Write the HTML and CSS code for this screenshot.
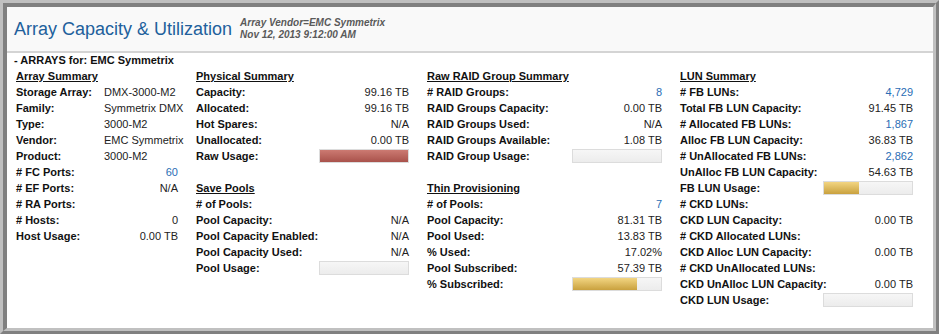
FILE: index.html
```html
<!DOCTYPE html>
<html lang="en">
<head>
  <meta charset="UTF-8" />
  <title>Array Capacity &amp; Utilization</title>
  <link rel="stylesheet" href="styles.css">
</head>
<body>
  <div class="frame">
    <div class="panel">
      <!-- Заголовок -->
      <div class="header">
        <h1 class="title">Array Capacity &amp; Utilization</h1>
        <div class="subtitle">
          <div>Array Vendor=EMC Symmetrix</div>
          <div>Nov 12, 2013 9:12:00 AM</div>
        </div>
      </div>

      <div class="content">
        <div class="group-title">- ARRAYS for: EMC Symmetrix</div>

        <div class="columns">
          <!-- Array Summary -->
          <div class="col col-1">
            <div class="heading">Array Summary</div>
            <div class="row"><span class="label">Storage Array:</span><span class="value text">DMX-3000-M2</span></div>
            <div class="row"><span class="label">Family:</span><span class="value text">Symmetrix DMX</span></div>
            <div class="row"><span class="label">Type:</span><span class="value text">3000-M2</span></div>
            <div class="row"><span class="label">Vendor:</span><span class="value text">EMC Symmetrix</span></div>
            <div class="row"><span class="label">Product:</span><span class="value text">3000-M2</span></div>
            <div class="row"><span class="label"># FC Ports:</span><span class="value link">60</span></div>
            <div class="row"><span class="label"># EF Ports:</span><span class="value">N/A</span></div>
            <div class="row"><span class="label"># RA Ports:</span><span class="value"></span></div>
            <div class="row"><span class="label"># Hosts:</span><span class="value">0</span></div>
            <div class="row"><span class="label">Host Usage:</span><span class="value">0.00 TB</span></div>
          </div>

          <!-- Physical Summary / Save Pools -->
          <div class="col col-2">
            <div class="heading">Physical Summary</div>
            <div class="row"><span class="label">Capacity:</span><span class="value">99.16 TB</span></div>
            <div class="row"><span class="label">Allocated:</span><span class="value">99.16 TB</span></div>
            <div class="row"><span class="label">Hot Spares:</span><span class="value">N/A</span></div>
            <div class="row"><span class="label">Unallocated:</span><span class="value">0.00 TB</span></div>
            <div class="row"><span class="label">Raw Usage:</span><span class="bar"><span class="fill red" style="width: 100%"></span></span></div>
            <div class="spacer"></div>
            <div class="heading">Save Pools</div>
            <div class="row"><span class="label"># of Pools:</span><span class="value"></span></div>
            <div class="row"><span class="label">Pool Capacity:</span><span class="value">N/A</span></div>
            <div class="row"><span class="label">Pool Capacity Enabled:</span><span class="value">N/A</span></div>
            <div class="row"><span class="label">Pool Capacity Used:</span><span class="value">N/A</span></div>
            <div class="row"><span class="label">Pool Usage:</span><span class="bar"></span></div>
          </div>

          <!-- RAID / Thin Provisioning -->
          <div class="col col-3">
            <div class="heading">Raw RAID Group Summary</div>
            <div class="row"><span class="label"># RAID Groups:</span><span class="value link">8</span></div>
            <div class="row"><span class="label">RAID Groups Capacity:</span><span class="value">0.00 TB</span></div>
            <div class="row"><span class="label">RAID Groups Used:</span><span class="value">N/A</span></div>
            <div class="row"><span class="label">RAID Groups Available:</span><span class="value">1.08 TB</span></div>
            <div class="row"><span class="label">RAID Group Usage:</span><span class="bar"></span></div>
            <div class="spacer"></div>
            <div class="heading">Thin Provisioning</div>
            <div class="row"><span class="label"># of Pools:</span><span class="value link">7</span></div>
            <div class="row"><span class="label">Pool Capacity:</span><span class="value">81.31 TB</span></div>
            <div class="row"><span class="label">Pool Used:</span><span class="value">13.83 TB</span></div>
            <div class="row"><span class="label">% Used:</span><span class="value">17.02%</span></div>
            <div class="row"><span class="label">Pool Subscribed:</span><span class="value">57.39 TB</span></div>
            <div class="row"><span class="label">% Subscribed:</span><span class="bar"><span class="fill gold" style="width: 73%"></span></span></div>
          </div>

          <!-- LUN Summary -->
          <div class="col col-4">
            <div class="heading">LUN Summary</div>
            <div class="row"><span class="label"># FB LUNs:</span><span class="value link">4,729</span></div>
            <div class="row"><span class="label">Total FB LUN Capacity:</span><span class="value">91.45 TB</span></div>
            <div class="row"><span class="label"># Allocated FB LUNs:</span><span class="value link">1,867</span></div>
            <div class="row"><span class="label">Alloc FB LUN Capacity:</span><span class="value">36.83 TB</span></div>
            <div class="row"><span class="label"># UnAllocated FB LUNs:</span><span class="value link">2,862</span></div>
            <div class="row"><span class="label">UnAlloc FB LUN Capacity:</span><span class="value">54.63 TB</span></div>
            <div class="row"><span class="label">FB LUN Usage:</span><span class="bar"><span class="fill gold" style="width: 40%"></span></span></div>
            <div class="row"><span class="label"># CKD LUNs:</span><span class="value"></span></div>
            <div class="row"><span class="label">CKD LUN Capacity:</span><span class="value">0.00 TB</span></div>
            <div class="row"><span class="label"># CKD Allocated LUNs:</span><span class="value"></span></div>
            <div class="row"><span class="label">CKD Alloc LUN Capacity:</span><span class="value">0.00 TB</span></div>
            <div class="row"><span class="label"># CKD UnAllocated LUNs:</span><span class="value"></span></div>
            <div class="row"><span class="label">CKD UnAlloc LUN Capacity:</span><span class="value">0.00 TB</span></div>
            <div class="row"><span class="label">CKD LUN Usage:</span><span class="bar"></span></div>
          </div>
        </div>
      </div>
    </div>
  </div>
</body>
</html>
```

FILE: styles.css
```css
body {
  margin: 0;
  font-family: "Liberation Sans", Arial, sans-serif;
  font-size: 11px;
  color: #111;
  background: #fff;
}

/* Рамка в стиле ridge */
.frame {
  width: 939px;
  height: 334px;
  box-sizing: border-box;
  border: 3px solid;
  border-color: #c0c0c0 #808080 #808080 #c0c0c0;
}

.panel {
  height: 100%;
  box-sizing: border-box;
  border-style: solid;
  border-width: 4px 3px 3px 4px;
  border-color: #808080 #c0c0c0 #c0c0c0 #808080;
  background: #fff;
}

/* Заголовок */
.header {
  display: flex;
  align-items: center;
  height: 44px;
  padding-left: 7px;
  background: #f9f9f9;
  border-bottom: 2px solid #d4d4d4;
}

.title {
  margin: 0;
  font-size: 18px;
  font-weight: normal;
  color: #21609c;
  padding-top: 1px;
}

.subtitle {
  margin-left: 8px;
  font-size: 10px;
  font-weight: bold;
  font-style: italic;
  color: #5a5a5a;
  line-height: 12px;
}

/* Содержимое */
.content {
  padding: 0 0 0 7px;
}

.group-title {
  font-weight: bold;
  line-height: 15px;
}

.columns {
  display: flex;
  gap: 18px;
  padding-left: 2px;
}

.col-1 { width: 162px; }
.col-2 { width: 213px; }
.col-3 { width: 235px; }
.col-4 { width: 233px; }

.heading {
  font-weight: bold;
  text-decoration: underline;
  line-height: 16px;
}

.spacer {
  height: 16px;
}

.row {
  display: flex;
  justify-content: space-between;
  align-items: center;
  height: 16px;
}

.label {
  font-weight: bold;
  white-space: nowrap;
}

.value {
  white-space: nowrap;
  color: #222;
  text-align: right;
}

.col-1 .label {
  width: 88px;
}

.col-1 .value {
  width: 74px;
}

.col-1 .value.text {
  text-align: left;
}

.value.link {
  color: #2a6db5;
}

/* Полосы использования */
.bar {
  display: block;
  width: 88px;
  height: 12px;
  border: 1px solid #dcdcdc;
  background: linear-gradient(to bottom, #f6f6f6, #ececec);
}

.fill {
  display: block;
  height: 100%;
}

.fill.red {
  background: linear-gradient(to bottom, #cc7a72, #a9524b);
}

.fill.gold {
  background: linear-gradient(to bottom, #f2d582, #c9a13e);
}
```
